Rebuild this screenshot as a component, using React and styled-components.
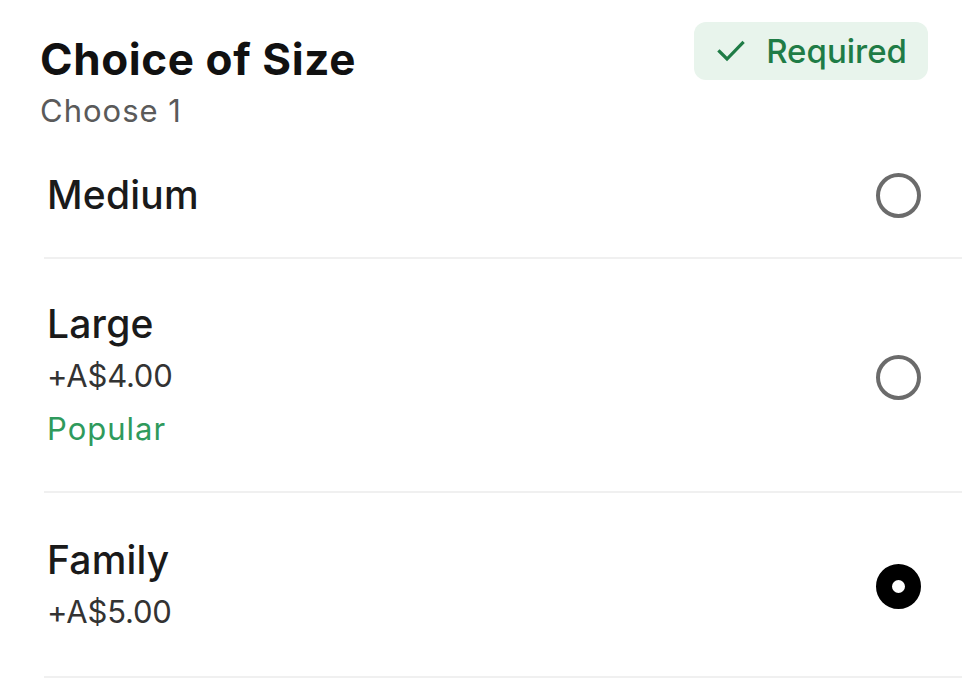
import React, { useState } from "react";
import styled, { createGlobalStyle } from "styled-components";

const GlobalStyle = createGlobalStyle`
  html, body {
    margin: 0;
    padding: 0;
    background: #fff;
  }
  body {
    font-family: Inter, "Noto Sans", sans-serif;
    color: #161616;
  }
`;

const Page = styled.div`
  width: 969px;
  height: 678px;
  overflow: hidden;
  background: #fff;
`;

const Header = styled.div`
  display: flex;
  justify-content: space-between;
  align-items: flex-start;
  padding: 22px 41px 0 40px;
`;

const TitleBlock = styled.div`
  padding-top: 13px;
`;

const Title = styled.h2`
  margin: 0;
  font-size: 44px;
  line-height: 48px;
  font-weight: 700;
  letter-spacing: 0.6px;
  color: #111;
`;

const Subtitle = styled.div`
  margin-top: 8px;
  font-size: 31px;
  line-height: 40px;
  letter-spacing: 1px;
  color: #5a5a5a;
`;

const Badge = styled.div`
  display: flex;
  align-items: center;
  gap: 21px;
  height: 58px;
  padding: 0 21px 0 23px;
  box-sizing: border-box;
  border-radius: 12px;
  background: #e8f4ec;
  color: #1f7c46;
  font-size: 33px;
  font-weight: 500;
`;

const Options = styled.div`
  margin: 0 7px 0 44px;
`;

const Row = styled.label`
  display: flex;
  align-items: center;
  justify-content: space-between;
  padding: ${({ $top }) => $top}px 41px ${({ $bottom }) => $bottom}px 3px;
  border-bottom: 2px solid #f0f0f0;
  cursor: pointer;
`;

const Info = styled.div`
  display: flex;
  flex-direction: column;
`;

const Name = styled.div`
  font-size: 39px;
  line-height: 46px;
  font-weight: 500;
  letter-spacing: 0.2px;
  color: #1a1a1a;
`;

const Sub = styled.div`
  margin-top: 5px;
  font-size: 31px;
  line-height: 48px;
  letter-spacing: ${({ $accent }) => ($accent ? "1px" : "-0.2px")};
  color: ${({ $accent }) => ($accent ? "#2f9a5c" : "#333")};
`;

const Radio = styled.span`
  width: 45px;
  height: 45px;
  box-sizing: border-box;
  border-radius: 50%;
  flex-shrink: 0;
  border: ${({ $checked }) => ($checked ? "16px solid #000" : "4.5px solid #6b6b6b")};
  background: #fff;
`;

const options = [
  { id: "medium", name: "Medium", top: 41, bottom: 39 },
  { id: "large", name: "Large", price: "+A$4.00", tag: "Popular", top: 42, bottom: 38 },
  { id: "family", name: "Family", price: "+A$5.00", top: 44, bottom: 40 },
];

function Check() {
  return (
    <svg width="28" height="22" viewBox="0 0 28 22" fill="none">
      <path d="M2.5 11.5 L10 19 L25.5 3" stroke="#1f7c46" strokeWidth="3.2" strokeLinecap="square" />
    </svg>
  );
}

export default function App() {
  const [selected, setSelected] = useState("family");
  return (
    <Page>
      <GlobalStyle />
      <Header>
        <TitleBlock>
          <Title>Choice of Size</Title>
          <Subtitle>Choose 1</Subtitle>
        </TitleBlock>
        <Badge>
          <Check />
          Required
        </Badge>
      </Header>
      <Options>
        {options.map((o) => (
          <Row key={o.id} $top={o.top} $bottom={o.bottom} onClick={() => setSelected(o.id)}>
            <Info>
              <Name>{o.name}</Name>
              {o.price && <Sub>{o.price}</Sub>}
              {o.tag && <Sub $accent>{o.tag}</Sub>}
            </Info>
            <Radio $checked={selected === o.id} />
          </Row>
        ))}
      </Options>
    </Page>
  );
}
